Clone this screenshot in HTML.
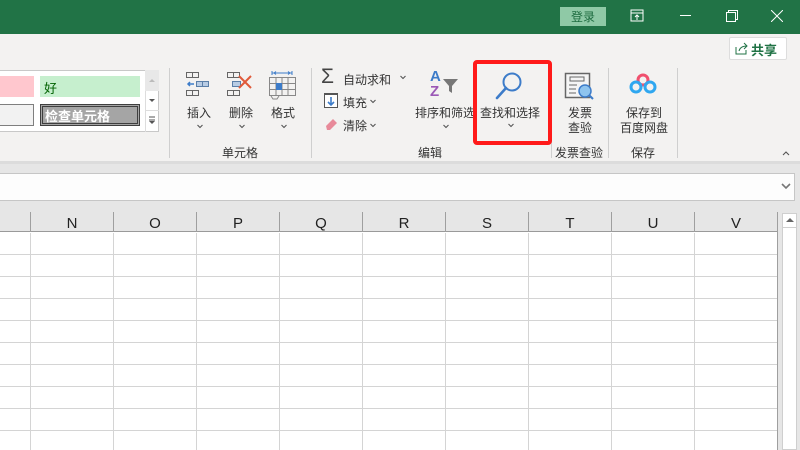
<!DOCTYPE html>
<html><head><meta charset="utf-8"><style>
*{margin:0;padding:0;box-sizing:border-box}
body{width:800px;height:450px;overflow:hidden;background:#fff;position:relative;font-family:"Liberation Sans","Noto Sans CJK SC",sans-serif;font-size:12px;color:#333}
.a{position:absolute}
.t{position:absolute;font-size:12px;color:#333;white-space:nowrap}
.c{text-align:center}
</style></head><body>
<!-- title bar -->
<div class="a" style="left:0;top:0;width:800px;height:34px;background:#217346"></div>
<div class="a" style="left:560px;top:7px;width:46px;height:19px;background:#8fc9a6"></div>
<div class="t c" style="left:560px;top:8px;width:46px;color:#1d6b3f;font-size:12px">登录</div>
<svg class="a" style="left:630px;top:9px" width="14" height="14"><rect x="1" y="1" width="12" height="11" fill="none" stroke="#fff"/><line x1="1" y1="4" x2="13" y2="4" stroke="#fff"/><path d="M7 11V6M5 8l2-2 2 2" stroke="#fff" fill="none"/></svg>
<div class="a" style="left:680px;top:15px;width:11px;height:1px;background:#fff"></div>
<svg class="a" style="left:726px;top:10px" width="12" height="12"><rect x="0.5" y="2.5" width="9" height="9" fill="none" stroke="#fff"/><path d="M2.5 2.5V0.5h9v9h-2" fill="none" stroke="#fff"/></svg>
<svg class="a" style="left:771px;top:10px" width="12" height="12"><path d="M0 0L12 12M12 0L0 12" stroke="#fff"/></svg>
<!-- ribbon -->
<div class="a" style="left:0;top:34px;width:800px;height:127px;background:#f3f2f1"></div>
<div class="a" style="left:0;top:161px;width:800px;height:3px;background:#dcdcdc"></div>
<div class="a" style="left:729px;top:37px;width:58px;height:23px;background:#fff;border:1px solid #ddd;border-radius:2px"></div>
<svg class="a" style="left:735px;top:42px" width="13" height="13"><path d="M1 5v7h10V8" fill="none" stroke="#217346"/><path d="M4 9c1-4 4-5 8-5M9 1l3 3-3 3" fill="none" stroke="#217346"/></svg>
<div class="t" style="left:751px;top:40px;font-size:13px;font-weight:bold;color:#217346">共享</div>
<!-- styles gallery -->
<div class="a" style="left:-2px;top:70px;width:161px;height:62px;background:#fff;border:1px solid #c8c8c8"></div>
<div class="a" style="left:0;top:76px;width:34px;height:21px;background:#ffc7ce"></div>
<div class="a" style="left:40px;top:76px;width:100px;height:21px;background:#c6efce"></div>
<div class="t" style="left:44px;top:78px;font-size:13px;color:#006100">好</div>
<div class="a" style="left:0;top:104px;width:34px;height:22px;background:#f2f2f2;border:1px solid #7f7f7f;border-left:none"></div>
<div class="a" style="left:40px;top:104px;width:100px;height:22px;background:#a5a5a5;border:3px double #3f3f3f"></div>
<div class="t" style="left:45px;top:106px;font-size:13px;color:#fff;font-weight:bold">检查单元格</div>
<div class="a" style="left:145px;top:70px;width:14px;height:62px;border-left:1px solid #ddd"></div>
<div class="a" style="left:145px;top:70px;width:14px;height:21px;background:#e8e8e8"></div>
<svg class="a" style="left:147px;top:77px" width="10" height="6"><path d="M2 5l3-3 3 3z" fill="#bbb"/></svg>
<svg class="a" style="left:147px;top:98px" width="10" height="6"><path d="M2 1l3 3 3-3z" fill="#555"/></svg>
<div class="a" style="left:145px;top:110px;width:14px;height:1px;background:#ddd"></div>
<svg class="a" style="left:147px;top:115px" width="10" height="10"><path d="M2 2h6M2 5h6" stroke="#555"/><path d="M2 6l3 3 3-3z" fill="#555"/></svg>
<!-- separators -->
<div class="a" style="left:169px;top:68px;width:1px;height:90px;background:#cfcfcf"></div>
<div class="a" style="left:311px;top:68px;width:1px;height:90px;background:#cfcfcf"></div>
<div class="a" style="left:551px;top:68px;width:1px;height:90px;background:#cfcfcf"></div>
<div class="a" style="left:608px;top:68px;width:1px;height:90px;background:#cfcfcf"></div>
<div class="a" style="left:677px;top:68px;width:1px;height:90px;background:#cfcfcf"></div>
<!-- chevrons -->
<svg class="a" style="left:0;top:0" width="800" height="200" fill="none" stroke="#555" stroke-width="1.1">
<path d="M197.5 125l2.5 2.5 2.5-2.5"/>
<path d="M239.5 125l2.5 2.5 2.5-2.5"/>
<path d="M281.5 125l2.5 2.5 2.5-2.5"/>
<path d="M443.5 125l2.5 2.5 2.5-2.5"/>
<path d="M508.5 124l2.5 2.5 2.5-2.5"/>
<path d="M400.5 76l2.5 2.5 2.5-2.5"/>
<path d="M370.5 100l2.5 2.5 2.5-2.5"/>
<path d="M370.5 124l2.5 2.5 2.5-2.5"/>
<path d="M783 155l3-3 3 3"/>
<path d="M783 185l3 3 3-3" stroke="#777" stroke-width="1.6"/>
</svg>
<!-- cells group -->
<svg class="a" style="left:185px;top:71px" width="28" height="28" fill="none" stroke="#666"><rect x="1.5" y="1.5" width="6" height="5"/><rect x="7.5" y="1.5" width="6" height="5"/><rect x="11.5" y="10.5" width="6" height="5" fill="#b8cce4" stroke="#5b7fa8"/><rect x="17.5" y="10.5" width="6" height="5" fill="#b8cce4" stroke="#5b7fa8"/><path d="M3 13h6M5 11l-2 2 2 2" stroke="#3d7cc9" stroke-width="1.5"/><rect x="1.5" y="19.5" width="6" height="5"/><rect x="7.5" y="19.5" width="6" height="5"/></svg>
<svg class="a" style="left:226px;top:71px" width="32" height="28" fill="none" stroke="#666"><rect x="1.5" y="1.5" width="6" height="5"/><rect x="7.5" y="1.5" width="6" height="5"/><rect x="6.5" y="10.5" width="8" height="5" fill="#b8cce4" stroke="#5b7fa8"/><rect x="1.5" y="19.5" width="6" height="5"/><rect x="7.5" y="19.5" width="6" height="5"/><path d="M13 5l12 12M25 5L13 17" stroke="#e05a3a" stroke-width="2"/></svg>
<svg class="a" style="left:268px;top:70px" width="30" height="32" fill="none" stroke="#888"><path d="M4 3h20M4 1v4M24 1v4M6 3l2-1.5M6 3l2 1.5M22 3l-2-1.5M22 3l-2 1.5" stroke="#3d7cc9"/><rect x="1.5" y="7.5" width="26" height="18"/><path d="M1.5 13.5h26M1.5 19.5h26M8 7.5v18M14 7.5v18M20 7.5v18"/><rect x="8" y="13" width="6" height="7" fill="#3d7cc9" stroke="none"/><path d="M3 26l2 3h4l2-3" /></svg>
<div class="t c" style="left:183px;top:104px;width:32px">插入</div>
<div class="t c" style="left:225px;top:104px;width:32px">删除</div>
<div class="t c" style="left:267px;top:104px;width:32px">格式</div>
<div class="t" style="left:222px;top:144px">单元格</div>
<!-- editing group -->
<div class="t" style="left:321px;top:66px;font-size:21px;color:#444;line-height:21px">Σ</div>
<div class="t" style="left:343px;top:71px">自动求和</div>
<svg class="a" style="left:324px;top:93px" width="14" height="15"><rect x="0.5" y="0.5" width="13" height="14" fill="#fff" stroke="#555"/><rect x="0" y="0" width="14" height="2" fill="#555"/><path d="M7 4v8M4 9l3 3 3-3" stroke="#3d7cc9" stroke-width="1.6" fill="none"/></svg>
<div class="t" style="left:343px;top:94px">填充</div>
<svg class="a" style="left:324px;top:116px" width="15" height="14"><path d="M2 10l7-7 4 4-7 7H3z" fill="#e88a9a"/></svg>
<div class="t" style="left:343px;top:117px">清除</div>
<div class="t" style="left:430px;top:69px;font-size:15px;color:#3d7cc9;font-weight:bold;line-height:15px">A</div>
<div class="t" style="left:430px;top:84px;font-size:15px;color:#9b59b6;font-weight:bold;line-height:15px">Z</div>
<svg class="a" style="left:442px;top:78px" width="18" height="16"><path d="M1 1h15l-6 7v7l-3-2V8z" fill="#777"/></svg>
<div class="t" style="left:415px;top:104px">排序和筛选</div>
<div class="t" style="left:418px;top:144px">编辑</div>
<!-- find & select -->
<svg class="a" style="left:493px;top:70px" width="32" height="32"><circle cx="19" cy="12" r="8.5" fill="none" stroke="#3d7cc9" stroke-width="2"/><path d="M13 18L4 28" stroke="#3d7cc9" stroke-width="2.6" stroke-linecap="round"/></svg>
<div class="t" style="left:480px;top:104px">查找和选择</div>
<div class="a" style="left:473px;top:60px;width:79px;height:85px;border:4px solid #ff1a1a;border-radius:4px"></div>
<!-- invoice -->
<svg class="a" style="left:564px;top:72px" width="34" height="30"><rect x="1.5" y="1.5" width="24" height="24" fill="#f5f5f5" stroke="#666" stroke-width="1.5"/><rect x="6" y="5" width="14" height="4" fill="none" stroke="#666"/><path d="M5 13h8M5 17h7M5 21h7" stroke="#666"/><circle cx="21" cy="19" r="6" fill="#8ec4ee" stroke="#3d7cc9" stroke-width="1.5"/><path d="M25 23l4 4" stroke="#3d7cc9" stroke-width="2"/></svg>
<div class="t c" style="left:560px;top:104px;width:40px">发票</div>
<div class="t c" style="left:560px;top:119px;width:40px">查验</div>
<div class="t" style="left:555px;top:144px">发票查验</div>
<!-- baidu -->
<svg class="a" style="left:628px;top:72px" width="32" height="26"><circle cx="15" cy="8" r="5" fill="none" stroke="#f0506e" stroke-width="3"/><circle cx="8" cy="15" r="5" fill="none" stroke="#2fa7f0" stroke-width="3"/><circle cx="22" cy="15" r="5" fill="none" stroke="#2fa7f0" stroke-width="3"/></svg>
<div class="t c" style="left:618px;top:104px;width:52px">保存到</div>
<div class="t c" style="left:618px;top:119px;width:52px">百度网盘</div>
<div class="t" style="left:631px;top:144px">保存</div>
<!-- formula bar area -->
<div class="a" style="left:0;top:164px;width:800px;height:48px;background:#e6e6e6"></div>
<div class="a" style="left:-2px;top:173px;width:797px;height:28px;background:#fdfdfd;border:1px solid #c6c6c6"></div>
<svg class="a" style="left:781px;top:182px" width="10" height="8"><path d="M1 2l4 4 4-4" fill="none" stroke="#777" stroke-width="1.6"/></svg>
<!-- column header -->
<div class="a" style="left:0;top:210px;width:778px;height:22px;background:#e6e6e6;border-bottom:1px solid #9a9a9a"></div>
<!-- scrollbar -->
<div class="a" style="left:778px;top:210px;width:22px;height:240px;background:#e6e6e6"></div>
<div class="a" style="left:782px;top:213px;width:15px;height:237px;background:#fff;border:1px solid #cfcfcf"></div>
<div class="a" style="left:782px;top:213px;width:15px;height:15px;border-bottom:1px solid #cfcfcf"></div>
<svg class="a" style="left:785px;top:217px" width="10" height="6"><path d="M1 5l4-4 4 4z" fill="#666"/></svg>
<svg class="a" style="left:0;top:210px" width="780" height="240">
<g stroke="#9f9f9f"><line x1="30.5" y1="2" x2="30.5" y2="22"/><line x1="113.5" y1="2" x2="113.5" y2="22"/><line x1="196.5" y1="2" x2="196.5" y2="22"/><line x1="279.5" y1="2" x2="279.5" y2="22"/><line x1="362.5" y1="2" x2="362.5" y2="22"/><line x1="445.5" y1="2" x2="445.5" y2="22"/><line x1="528.5" y1="2" x2="528.5" y2="22"/><line x1="611.5" y1="2" x2="611.5" y2="22"/><line x1="694.5" y1="2" x2="694.5" y2="22"/><line x1="777.5" y1="2" x2="777.5" y2="240"/></g>
<g stroke="#d4d4d4"><line x1="30.5" y1="23" x2="30.5" y2="240"/><line x1="113.5" y1="23" x2="113.5" y2="240"/><line x1="196.5" y1="23" x2="196.5" y2="240"/><line x1="279.5" y1="23" x2="279.5" y2="240"/><line x1="362.5" y1="23" x2="362.5" y2="240"/><line x1="445.5" y1="23" x2="445.5" y2="240"/><line x1="528.5" y1="23" x2="528.5" y2="240"/><line x1="611.5" y1="23" x2="611.5" y2="240"/><line x1="694.5" y1="23" x2="694.5" y2="240"/>
<line x1="0" y1="44.5" x2="777" y2="44.5"/><line x1="0" y1="66.5" x2="777" y2="66.5"/><line x1="0" y1="88.5" x2="777" y2="88.5"/><line x1="0" y1="110.5" x2="777" y2="110.5"/><line x1="0" y1="132.5" x2="777" y2="132.5"/><line x1="0" y1="154.5" x2="777" y2="154.5"/><line x1="0" y1="176.5" x2="777" y2="176.5"/><line x1="0" y1="198.5" x2="777" y2="198.5"/><line x1="0" y1="220.5" x2="777" y2="220.5"/></g>
<g font-family="Liberation Sans" font-size="15" fill="#222" text-anchor="middle"><text x="72" y="18">N</text><text x="155" y="18">O</text><text x="238" y="18">P</text><text x="321" y="18">Q</text><text x="404" y="18">R</text><text x="487" y="18">S</text><text x="570" y="18">T</text><text x="653" y="18">U</text><text x="736" y="18">V</text></g>
</svg>
</body></html>
